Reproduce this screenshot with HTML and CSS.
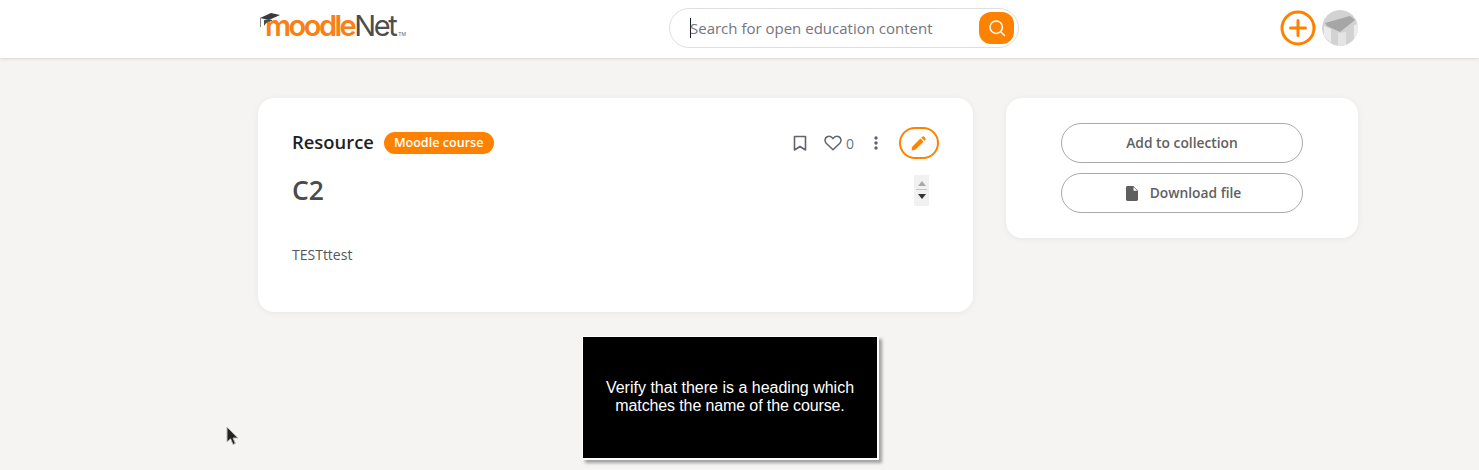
FILE: index.html
```html
<!DOCTYPE html>
<html lang="en">
<head>
  <meta charset="UTF-8">
  <title>MoodleNet Resource</title>
  <link rel="stylesheet" href="styles.css">
</head>
<body>

  <header class="topbar">
    <div class="topbar-inner">
      <a class="logo">
        <svg class="logo-cap" viewBox="0 0 22 16" width="22" height="16">
          <path d="M1 6 L12 1 L21 3 L10 8 Z" fill="#3a3a3a"/>
          <path d="M5 8 Q9 7 13 8 L13 9 Q8 9 5 14 Z" fill="#4a4a4a"/>
          <path d="M1.5 6 L1.5 15" stroke="#888" stroke-width="1" fill="none"/>
        </svg>
        <span class="logo-moodle">moodle</span><span class="logo-net">Net</span><span class="logo-tm">TM</span>
      </a>

      <div class="search">
        <span class="caret"></span>
        <span class="search-text">Search for open education content</span>
        <button class="search-btn">
          <svg viewBox="0 0 18 18" width="18" height="18" fill="none" stroke="#fff" stroke-width="1.5">
            <circle cx="8.2" cy="8.2" r="6.2"/>
            <path d="M12.8 12.8 L16.5 16.5" stroke-linecap="round"/>
          </svg>
        </button>
      </div>

      <div class="topbar-actions">
        <svg viewBox="0 0 36 36" width="36" height="36" fill="none" stroke="#ff8100" stroke-width="3">
          <circle cx="18" cy="18" r="16"/>
          <path d="M18 10.5 V25.5 M10.5 18 H25.5" stroke-linecap="round"/>
        </svg>
        <svg class="avatar" viewBox="0 0 36 36" width="36" height="36">
          <circle cx="18" cy="18" r="18" fill="#d2d2d2"/>
          <path d="M3 13 L28 6 L33 10 L18 22 L5 16 Z" fill="#a6a6a6"/>
          <path d="M2 16 L9 19 L9 33 L2 26 Z" fill="#ececec"/>
          <path d="M16 23 L24 22 L24 36 L16 36 Z" fill="#e4e4e4"/>
          <path d="M32 15 L36 14 L36 24 L32 30 Z" fill="#ececec"/>
        </svg>
      </div>
    </div>
  </header>

  <main class="content">
    <section class="card resource">
      <div class="resource-head">
        <div class="resource-label">
          <span class="resource-type">Resource</span>
          <span class="badge">Moodle course</span>
        </div>
        <div class="resource-actions">
          <svg viewBox="0 0 14 17" width="14" height="17" fill="none" stroke="#5f6470" stroke-width="1.6">
            <path d="M1.5 1.5 H12.5 V15 L7 11.5 L1.5 15 Z" stroke-linejoin="round"/>
          </svg>
          <span class="like">
            <svg viewBox="0 0 18 16" width="18" height="16" fill="none" stroke="#5f6470" stroke-width="1.5">
              <path d="M9 14.8 L2.2 8.2 C0.2 6.1 0.8 2.8 3.2 1.7 C5.3 0.8 7.6 1.5 9 3.6 C10.4 1.5 12.7 0.8 14.8 1.7 C17.2 2.8 17.8 6.1 15.8 8.2 Z" stroke-linejoin="round"/>
            </svg>
            <span class="like-count">0</span>
          </span>
          <svg class="dots" viewBox="0 0 4 14" width="4" height="14" fill="#5f6470">
            <circle cx="2" cy="2" r="1.7"/>
            <circle cx="2" cy="7" r="1.7"/>
            <circle cx="2" cy="12" r="1.7"/>
          </svg>
          <button class="edit-btn">
            <svg viewBox="0 0 16 16" width="15" height="15" fill="#ff8100">
              <path d="M0.5 15.5 L1.3 11.4 L10 2.7 L13.3 6 L4.6 14.7 Z"/>
              <path d="M11 1.7 L12.3 0.5 Q13 0 13.7 0.5 L15.5 2.3 Q16 3 15.5 3.7 L14.3 5 Z"/>
            </svg>
          </button>
        </div>
      </div>

      <div class="title-row">
        <h1>C2</h1>
        <div class="spinner">
          <span class="arrow-up"></span>
          <span class="spinner-line"></span>
          <span class="arrow-down"></span>
        </div>
      </div>

      <p class="description">TESTttest</p>
    </section>

    <aside class="card side">
      <button class="pill">Add to collection</button>
      <button class="pill pill-file">
        <svg viewBox="0 0 13 16" width="12" height="15" fill="#5f5f5f">
          <path d="M1.5 0 H8 L13 5 V14.5 Q13 16 11.5 16 H1.5 Q0 16 0 14.5 V1.5 Q0 0 1.5 0 Z"/>
          <path d="M8.2 1 V5 H12.2 Z" fill="#fff"/>
        </svg>
        Download file
      </button>
    </aside>
  </main>

  <div class="step-note">
    <p>Verify that there is a heading which<br><span class="note-line">matches the name of the course.</span></p>
  </div>

  <svg class="cursor" viewBox="0 0 14 22" width="14" height="22">
    <path d="M1 1 L1 16 L4.6 12.8 L7 18.5 L9.4 17.4 L7 12 L11.8 12 Z" fill="#222" stroke="#bbb" stroke-width="1"/>
  </svg>

</body>
</html>
```

FILE: styles.css
```css
* {
  box-sizing: border-box;
}

html, body {
  height: 100%;
}

body {
  font-family: "Open Sans", sans-serif;
  background: #f5f4f2;
  margin: 0;
  padding: 0;
  color: #4a4a4f;
  overflow: hidden;
}

button {
  font-family: inherit;
  background: none;
  border: 0;
  padding: 0;
}

.topbar {
  height: 58px;
  background: #fff;
  box-shadow: 0 1px 3px rgba(0,0,0,0.12);
  padding-bottom: 2px;
}

.topbar-inner {
  width: 1100px;
  height: 100%;
  margin-left: 258px;
  display: flex;
  align-items: center;
  justify-content: space-between;
}

.logo {
  width: 411px;
  display: flex;
  align-items: baseline;
  font-family: "Inter", sans-serif;
  font-size: 29px;
  line-height: 30px;
  white-space: nowrap;
  position: relative;
  padding: 4px 0 0 7px;
}

.logo-cap {
  position: absolute;
  left: 1px;
  top: 5px;
}

.logo-moodle {
  color: #f98012;
  font-weight: 600;
  letter-spacing: -2.5px;
}

.logo-net {
  color: #4d4d4d;
  font-weight: 400;
  letter-spacing: -2.4px;
}

.logo-tm {
  font-size: 5px;
  color: #666;
  margin-left: 3px;
}

.search {
  width: 350px;
  height: 40px;
  background: #fff;
  border: 1px solid #dfdfdf;
  border-radius: 20px;
  display: flex;
  align-items: center;
  padding: 0 4px 0 20px;
  position: relative;
}

.caret {
  position: absolute;
  left: 20px;
  top: 9px;
  width: 1px;
  height: 20px;
  background: #222;
}

.search-text {
  flex: 1;
  font-size: 15px;
  color: #75757d;
}

.search-btn {
  width: 35px;
  height: 32px;
  background: #ff8100;
  border-radius: 12px;
  display: flex;
  align-items: center;
  justify-content: center;
}

.topbar-actions {
  display: flex;
  align-items: center;
  gap: 6px;
  width: 339px;
  justify-content: flex-end;
}

.avatar {
  border-radius: 50%;
}

.content {
  width: 1100px;
  margin: 40px 0 0 258px;
  display: flex;
  align-items: flex-start;
  gap: 33px;
}

.card {
  background: #fff;
  border-radius: 16px;
  box-shadow: 0 1px 6px rgba(0,0,0,0.06);
}

.resource {
  width: 715px;
  height: 214px;
  padding: 29px 34px 0 34px;
}

.resource-head {
  display: flex;
  align-items: center;
  justify-content: space-between;
  height: 32px;
}

.resource-label {
  display: flex;
  align-items: center;
  gap: 10px;
}

.resource-type {
  font-size: 18.4px;
  font-weight: 600;
  line-height: 24px;
  padding-bottom: 2px;
  color: #1f1f24;
}

.badge {
  background: #ff8100;
  color: #fff;
  font-size: 12.6px;
  font-weight: 600;
  line-height: 22px;
  height: 22px;
  padding: 0 10px;
  border-radius: 11px;
}

.resource-actions {
  display: flex;
  align-items: center;
}

.like {
  display: flex;
  align-items: center;
  gap: 4px;
  margin-left: 17px;
}

.like-count {
  font-size: 14px;
  color: #6a7486;
}

.dots {
  margin: 0 21px 0 20px;
}

.edit-btn {
  width: 40px;
  height: 32px;
  border: 2px solid #ff8100;
  border-radius: 16px;
  display: flex;
  align-items: center;
  justify-content: center;
  padding-right: 2px;
}

.title-row {
  display: flex;
  align-items: flex-start;
  justify-content: space-between;
  margin-top: 14px;
  padding-right: 10px;
}

h1 {
  margin: 0;
  font-size: 26.5px;
  font-weight: 600;
  line-height: 34px;
  color: #4a4a4f;
}

.spinner {
  width: 15px;
  height: 31px;
  margin-top: 2px;
  background: #f1f1f1;
  display: flex;
  flex-direction: column;
  align-items: center;
  padding-top: 6px;
}

.arrow-up, .arrow-down {
  width: 0;
  height: 0;
  border-left: 4px solid transparent;
  border-right: 4px solid transparent;
}

.arrow-up {
  border-bottom: 5px solid #a9a9a9;
}

.arrow-down {
  border-top: 5px solid #333;
}

.spinner-line {
  width: 11px;
  height: 1px;
  background: #c4c4c4;
  margin: 3px 0 4px;
}

.description {
  margin: 38px 0 0;
  font-size: 14px;
  line-height: 20px;
  color: #55555b;
}

.side {
  width: 352px;
  height: 140px;
  padding-top: 25px;
  display: flex;
  flex-direction: column;
  align-items: center;
  gap: 10px;
}

.pill {
  width: 242px;
  height: 40px;
  background: #fff;
  border: 1px solid #a9a9a9;
  border-radius: 20px;
  font-size: 13.8px;
  font-weight: 600;
  color: #5f5f5f;
  display: flex;
  align-items: center;
  justify-content: center;
  gap: 12px;
  padding-bottom: 2px;
}

.pill-file {
  padding-left: 3px;
}

.pill svg {
  margin-top: 2px;
}

.step-note {
  position: absolute;
  left: 582px;
  top: 336px;
  width: 297px;
  height: 124px;
  background: #000;
  border: 1px solid #fff;
  border-width: 1px 2px 2px 1px;
  box-shadow: 3px 3px 3px rgba(0,0,0,0.35);
  color: #fff;
  font-family: "Liberation Sans", Arial, sans-serif;
  font-size: 16px;
  line-height: 18px;
  text-align: center;
  display: flex;
  align-items: center;
  justify-content: center;
  padding-bottom: 2px;
}

.step-note p {
  margin: 0;
}

.note-line {
  letter-spacing: -0.12px;
}

.cursor {
  position: absolute;
  left: 226px;
  top: 426px;
}
```
